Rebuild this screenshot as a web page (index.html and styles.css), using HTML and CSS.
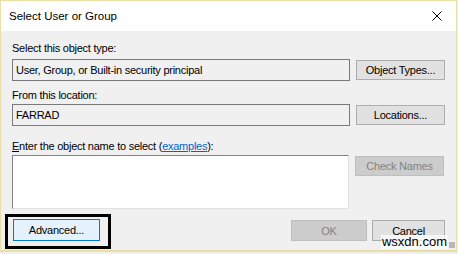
FILE: index.html
```html
<!DOCTYPE html>
<html lang="en">
<head>
  <meta charset="UTF-8">
  <title>Select User or Group</title>
  <link rel="stylesheet" href="styles.css">
</head>
<body>

<div class="window">
  <div class="titlebar">
    <span class="title">Select User or Group</span>
    <svg class="close" width="10" height="10" viewBox="0 0 10 10">
      <path d="M0.5 0.5 L9.5 9.5 M9.5 0.5 L0.5 9.5" stroke="#000" stroke-width="1" fill="none"/>
    </svg>
  </div>

  <div class="content">
    <div class="label first">Select this object type:</div>
    <div class="row">
      <div class="textbox">User, Group, or Built-in security principal</div>
      <button class="btn">Object Types...</button>
    </div>

    <div class="label second">From this location:</div>
    <div class="row">
      <div class="textbox">FARRAD</div>
      <button class="btn">Locations...</button>
    </div>

    <div class="label third"><u>E</u>nter the object name to select (<a href="#">examples</a>):</div>
    <div class="row">
      <div class="names"></div>
      <button class="btn disabled">Check Names</button>
    </div>
  </div>

  <div class="footer">
    <div class="focus-box">
      <button class="btn advanced">Advanced...</button>
    </div>
    <button class="btn disabled ok">OK</button>
    <button class="btn cancel">Cancel</button>
  </div>

  <div class="watermark">wsxdn.com</div>
  <div class="grip"></div>
</div>

</body>
</html>
```

FILE: styles.css
```css
body { margin: 0; width: 458px; height: 254px; overflow: hidden; background: #f0f0f0; font-family: "Liberation Sans", Arial, sans-serif; font-size: 11px; letter-spacing: -0.25px; color: #000; }
.window { position: relative; box-sizing: border-box; width: 457px; height: 252px; border: 1px solid #eadfa3; border-bottom-width: 2px; background: #f0f0f0; }
.titlebar { height: 30px; background: #fff; display: flex; align-items: center; justify-content: space-between; padding: 0 14px 0 8px; }
.title { font-size: 11.5px; letter-spacing: 0; }
.content { padding: 0 0 0 11px; }
.label { height: 13px; line-height: 13px; }
.label.first { margin-top: 11px; margin-bottom: 4px; }
.label.second { margin-top: 8px; margin-bottom: 2px; }
.label.third { margin-top: 14px; margin-bottom: 2px; }
.label a { color: #0066cc; }
.row { display: flex; align-items: flex-start; gap: 6px; }
.textbox { box-sizing: border-box; width: 338px; height: 22px; border: 1px solid #7a7a7a; padding: 0 3px; line-height: 20px; background: #f0f0f0; }
.names { box-sizing: border-box; width: 337px; height: 54px; background: #fff; border: 1px solid #e3e3e3; border-top-color: #828282; border-left-color: #828282; }
.btn { box-sizing: border-box; width: 89px; height: 20px; margin-top: 1px; padding: 0; font-family: inherit; font-size: 11px; letter-spacing: -0.25px; color: #000; background: #e1e1e1; border: 1px solid #adadad; }
.btn.disabled { background: #cccccc; border-color: #bfbfbf; color: #838383; }
.footer { display: flex; align-items: flex-start; padding: 5px 0 0 4px; }
.focus-box { border: 3px solid #000; padding: 2px 8px 5px 5px; }
.btn.advanced { display: block; width: 87px; height: 22px; margin: 0; background: #e5f1fb; border-color: #0078d7; }
.btn.ok { width: 76px; height: 21px; margin: 6px 0 0 180px; }
.btn.cancel { width: 73px; height: 21px; margin: 6px 0 0 5px; }
.watermark { position: absolute; right: 8px; bottom: 1px; padding: 0 1px; font-size: 13px; line-height: 14px; letter-spacing: 0; background: rgba(255, 255, 255, 0.7); }
.grip { position: absolute; right: 1px; bottom: 2px; width: 6px; height: 6px; background: radial-gradient(circle, #b8b8b8 0.8px, transparent 1px) 0 0 / 2px 2px; }
```
